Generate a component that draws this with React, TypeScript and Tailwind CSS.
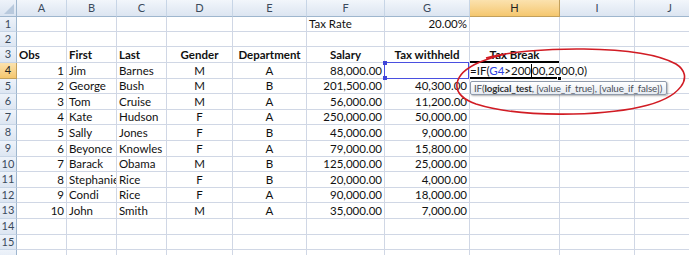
import React from "react";

type Cell = { t?: string; a?: "l" | "c" | "r"; b?: boolean };

const colLetters = ["A", "B", "C", "D", "E", "F", "G", "H", "I", "J"];
const colW = ["w-[50px]", "w-[50px]", "w-[50px]", "w-[66px]", "w-[74px]", "w-[78px]", "w-[85px]", "w-[90px]", "w-[75px]", "w-[70px]"];
const rowH = ["h-[15px]", "h-[15px]", "h-[16px]", "h-[16px]", "h-[15px]", "h-[16px]", "h-[15px]", "h-[16px]", "h-[16px]", "h-[15px]", "h-[16px]", "h-[15px]", "h-[16px]", "h-[16px]", "h-[15px]", "h-[15px]"];

const people: [string, string, string, string, string, string, string][] = [
  ["1", "Jim", "Barnes", "M", "A", "88,000.00", ""],
  ["2", "George", "Bush", "M", "B", "201,500.00", "40,300.00"],
  ["3", "Tom", "Cruise", "M", "A", "56,000.00", "11,200.00"],
  ["4", "Kate", "Hudson", "F", "A", "250,000.00", "50,000.00"],
  ["5", "Sally", "Jones", "F", "B", "45,000.00", "9,000.00"],
  ["6", "Beyonce", "Knowles", "F", "A", "79,000.00", "15,800.00"],
  ["7", "Barack", "Obama", "M", "B", "125,000.00", "25,000.00"],
  ["8", "Stephanie", "Rice", "F", "B", "20,000.00", "4,000.00"],
  ["9", "Condi", "Rice", "F", "A", "90,000.00", "18,000.00"],
  ["10", "John", "Smith", "M", "A", "35,000.00", "7,000.00"],
];

function buildRows(): Cell[][] {
  const rows: Cell[][] = [];
  const empty = (): Cell[] => colLetters.map(() => ({}));
  const r1 = empty();
  r1[5] = { t: "Tax Rate", a: "l" };
  r1[6] = { t: "20.00%", a: "r" };
  rows.push(r1);
  rows.push(empty());
  rows.push([
    { t: "Obs", a: "l", b: true },
    { t: "First", a: "l", b: true },
    { t: "Last", a: "l", b: true },
    { t: "Gender", a: "c", b: true },
    { t: "Department", a: "c", b: true },
    { t: "Salary", a: "c", b: true },
    { t: "Tax withheld", a: "c", b: true },
    { t: "Tax Break", a: "c", b: true },
    {},
    {},
  ]);
  for (const p of people) {
    rows.push([
      { t: p[0], a: "r" },
      { t: p[1], a: "l" },
      { t: p[2], a: "l" },
      { t: p[3], a: "c" },
      { t: p[4], a: "c" },
      { t: p[5], a: "r" },
      { t: p[6], a: "r" },
      {},
      {},
      {},
    ]);
  }
  rows.push(empty());
  rows.push(empty());
  rows.push(empty());
  return rows;
}

const alignCls = { l: "justify-start pl-[2px]", c: "justify-center", r: "justify-end pr-[2px]" };

export default function App() {
  const rows = buildRows();
  return (
    <div className="relative w-[689px] h-[255px] overflow-hidden bg-white font-['Lato',sans-serif] text-[11.5px] text-[#111]">
      {/* column headers */}
      <div className="flex h-[17px] w-max">
        <div className="relative w-[17px] shrink-0 border-r border-b border-[#9eb6ce] bg-linear-to-b from-[#eef3fa] to-[#d9e3f0]">
          <svg className="absolute right-[2px] bottom-[2px]" width="10" height="10" viewBox="0 0 10 10">
            <polygon points="10,0 10,10 0,10" fill="#b8c9dd" />
          </svg>
        </div>
        {colLetters.map((c, i) => (
          <div
            key={c}
            className={`${colW[i]} shrink-0 flex items-center justify-center border-r border-b text-[11px] ${
              c === "H"
                ? "bg-linear-to-b from-[#fbe2ae] to-[#f5c76e] border-[#c2a05c] text-[#222]"
                : "bg-linear-to-b from-[#f2f6fb] to-[#dce5f1] border-r-[#c7d5e6] border-b-[#9eb6ce] text-[#3a4a5c]"
            }`}
          >
            {c}
          </div>
        ))}
      </div>
      {/* rows */}
      {rows.map((row, ri) => (
        <div key={ri} className={`flex w-max ${rowH[ri]}`}>
          <div
            className={`w-[17px] shrink-0 flex items-center justify-center border-r border-b text-[11px] ${
              ri === 3
                ? "bg-linear-to-b from-[#fbe2ae] to-[#f5c76e] border-[#c2a05c] text-[#222]"
                : "bg-linear-to-b from-[#eef3fa] to-[#dde6f2] border-r-[#9eb6ce] border-b-[#c7d5e6] text-[#3a4a5c]"
            }`}
          >
            {ri < 15 ? ri + 1 : ""}
          </div>
          {row.map((cell, ci) => {
            const isG4 = ri === 3 && ci === 6;
            const isH4 = ri === 3 && ci === 7;
            return (
              <div
                key={ci}
                className={`${colW[ci]} shrink-0 relative flex items-center border-r border-b border-[#d0d7e5] whitespace-nowrap ${
                  isH4 ? "overflow-visible z-10" : isG4 ? "overflow-visible z-[5]" : "overflow-hidden"
                } ${cell.a ? alignCls[cell.a] : ""} ${cell.b ? "font-bold" : ""}`}
              >
                {cell.t}
                {isG4 && (
                  <>
                    <div className="absolute -top-px -left-px right-0 -bottom-px border-[1.5px] border-[#4a4fe0]" />
                    <div className="absolute -top-[2px] -left-[2px] w-[4px] h-[4px] bg-[#3f45d8]" />
                    <div className="absolute -bottom-[2px] -left-[2px] w-[4px] h-[4px] bg-[#3f45d8]" />
                  </>
                )}
                {isH4 && (
                  <>
                    <div className="absolute -top-[2px] left-0 right-0 -bottom-[1px] border-y-2 border-black" />
                    <div className="absolute -bottom-[3px] -right-[3px] w-[5px] h-[5px] bg-black border border-white" />
                    <span className="relative">
                      =IF(<span className="text-[#2b3fe0]">G4</span>&gt;200
                      <span className="inline-block w-px h-[15px] bg-black align-middle -my-[2px]" />
                      00,2000,0)
                    </span>
                  </>
                )}
              </div>
            );
          })}
        </div>
      ))}

      {/* function tooltip */}
      <div className="absolute left-[470px] top-[81px] w-max h-[14px] flex items-center pl-[3px] pr-[4px] border border-[#8f9aab] rounded-[2px] bg-linear-to-b from-[#ffffff] to-[#e6ebf2] shadow-[1px_1px_2px_rgba(0,0,0,0.3)] text-[9.8px] tracking-[-0.15px] text-[#4a4f57] whitespace-nowrap z-20">
        IF(<span className="font-bold text-[#333]">logical_test</span>, [value_if_true], [value_if_false])
      </div>

      {/* red hand-drawn ellipse */}
      <svg className="absolute left-0 top-0 z-30 pointer-events-none" width="689" height="255" viewBox="0 0 689 255">
        <path
          d="M 486 58 C 530 46, 640 44, 676 64 C 695 76, 682 98, 640 107 C 600 116, 520 118, 476 104 C 448 94, 452 74, 480 62 C 488 59, 496 56, 506 54"
          fill="none"
          stroke="#d11c24"
          strokeWidth="1.6"
        />
      </svg>
    </div>
  );
}
